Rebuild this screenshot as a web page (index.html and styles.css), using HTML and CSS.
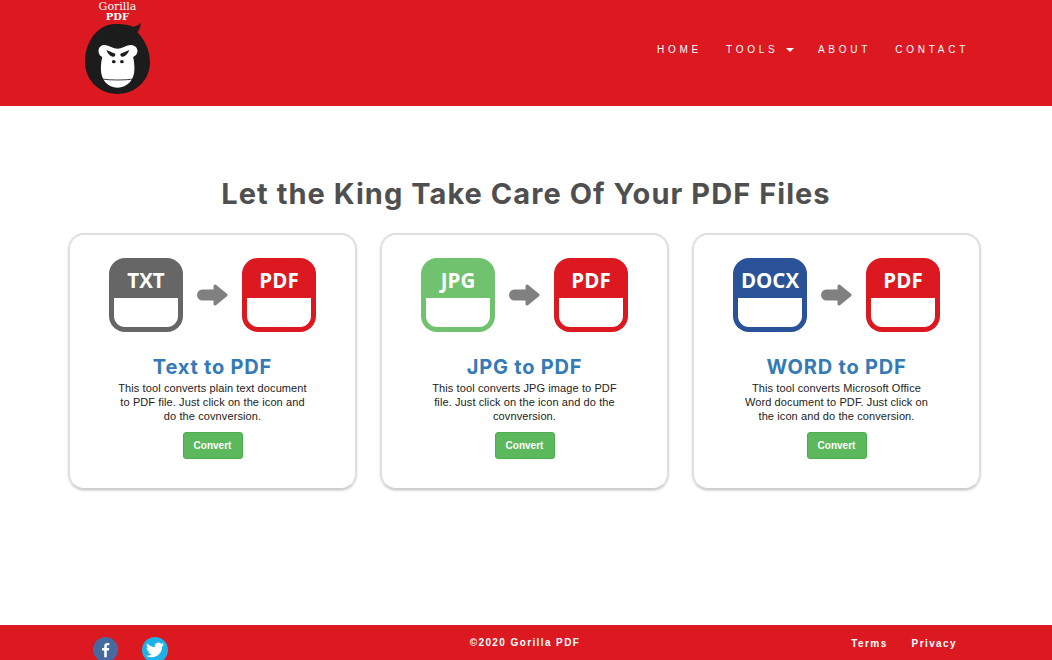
FILE: index.html
```html
<!DOCTYPE html>
<html lang="en">
<head>
<meta charset="utf-8">
<title>Gorilla PDF</title>
<link rel="stylesheet" href="styles.css">
</head>
<body>
<header class="site-header">
  <a class="brand" href="#">
    <span class="brand-name">Gorilla</span>
    <span class="brand-pdf">PDF</span>
    <svg class="brand-mark" viewBox="75 66 192 216" preserveAspectRatio="none" aria-hidden="true">
      <path fill="#1c1c1c" d="M165 72C190 72 208 76 218 80C226 78 234 74 241 68L237 77L241 76L235 83L239 84L232 89L236 92L229 95C250 118 267 150 267 186C267 240 225 282 171 282C117 282 75 240 75 186C75 125 112 72 165 72Z"/>
      <path fill="#fff" d="M115 153C115 142 123 134 134 135C146 136 158 146 171 146C184 146 196 136 208 135C220 134 230 142 230 153C230 162 224 168 217 171C220 182 221 194 221 208C221 240 200 263 171 263C142 263 122 240 122 208C122 194 123 182 126 171C119 168 115 162 115 153Z"/>
      <path fill="#1c1c1c" d="M138 150L164 161C166 166 163 171 157 170C149 169 142 161 138 150ZM206 150L180 161C178 166 181 171 187 170C195 169 202 161 206 150Z"/>
      <ellipse cx="160" cy="185" rx="5.500" ry="5" fill="#1c1c1c"/>
      <ellipse cx="184" cy="185" rx="5.500" ry="5" fill="#1c1c1c"/>
      <path fill="none" stroke="#1c1c1c" stroke-width="2.500" d="M124 237C150 241 192 241 219 237"/>
    </svg>
  </a>
  <nav class="main-nav">
    <a href="#">HOME</a>
    <a href="#">TOOLS <span class="caret"></span></a>
    <a href="#">ABOUT</a>
    <a href="#">CONTACT</a>
  </nav>
</header>

<main class="content">
  <h1>Let the King Take Care Of Your PDF Files</h1>
  <section class="cards">
    <article class="card">
      <div class="icons">
        <div class="doc doc-txt"><span class="doc-label">TXT</span><span class="doc-body"></span></div>
        <svg class="arrow" viewBox="0 0 31 24" aria-hidden="true"><path d="M18 3L29 12L18 21Z" fill="#808080" stroke="#808080" stroke-width="3" stroke-linejoin="round"/><path d="M5.500 12H20" stroke="#808080" stroke-width="11" stroke-linecap="round"/></svg>
        <div class="doc doc-pdf"><span class="doc-label">PDF</span><span class="doc-body"></span></div>
      </div>
      <h2>Text to PDF</h2>
      <p>This tool converts plain text document to PDF file. Just click on the icon and do the covnversion.</p>
      <a class="btn" href="#">Convert</a>
    </article>
    <article class="card">
      <div class="icons">
        <div class="doc doc-jpg"><span class="doc-label">JPG</span><span class="doc-body"></span></div>
        <svg class="arrow" viewBox="0 0 31 24" aria-hidden="true"><path d="M18 3L29 12L18 21Z" fill="#808080" stroke="#808080" stroke-width="3" stroke-linejoin="round"/><path d="M5.500 12H20" stroke="#808080" stroke-width="11" stroke-linecap="round"/></svg>
        <div class="doc doc-pdf"><span class="doc-label">PDF</span><span class="doc-body"></span></div>
      </div>
      <h2>JPG to PDF</h2>
      <p>This tool converts JPG image to PDF file. Just click on the icon and do the covnversion.</p>
      <a class="btn" href="#">Convert</a>
    </article>
    <article class="card">
      <div class="icons">
        <div class="doc doc-docx"><span class="doc-label">DOCX</span><span class="doc-body"></span></div>
        <svg class="arrow" viewBox="0 0 31 24" aria-hidden="true"><path d="M18 3L29 12L18 21Z" fill="#808080" stroke="#808080" stroke-width="3" stroke-linejoin="round"/><path d="M5.500 12H20" stroke="#808080" stroke-width="11" stroke-linecap="round"/></svg>
        <div class="doc doc-pdf"><span class="doc-label">PDF</span><span class="doc-body"></span></div>
      </div>
      <h2>WORD to PDF</h2>
      <p>This tool converts Microsoft Office Word document to PDF. Just click on the icon and do the conversion.</p>
      <a class="btn" href="#">Convert</a>
    </article>
  </section>
</main>

<footer class="site-footer">
  <div class="social">
    <a class="social-icon fb" href="#"><svg viewBox="0 0 24 24" aria-hidden="true"><path fill="#fff" d="M13.800 23v-9.500h3l.5-3.500h-3.500V7.700c0-1 .3-1.700 1.700-1.700h1.900V2.900c-.3 0-1.400-.1-2.700-.1-2.700 0-4.500 1.600-4.500 4.600V10H7v3.500h3.200V23z"/></svg></a>
    <a class="social-icon tw" href="#"><svg viewBox="0 0 24 24" aria-hidden="true"><path fill="#fff" d="M23.953 4.570a10 10 0 01-2.825.775 4.958 4.958 0 002.163-2.723c-.951.555-2.005.959-3.127 1.184a4.920 4.920 0 00-8.384 4.482C7.690 8.095 4.067 6.130 1.640 3.162a4.822 4.822 0 00-.666 2.475c0 1.710.870 3.213 2.188 4.096a4.904 4.904 0 01-2.228-.616v.060a4.923 4.923 0 003.946 4.827 4.996 4.996 0 01-2.212.085 4.936 4.936 0 004.604 3.417 9.867 9.867 0 01-6.102 2.105c-.390 0-.779-.023-1.170-.067a13.995 13.995 0 007.557 2.209c9.053 0 13.998-7.496 13.998-13.985 0-.210 0-.420-.015-.630A9.935 9.935 0 0024 4.590z"/></svg></a>
  </div>
  <div class="copyright">©2020 Gorilla PDF</div>
  <nav class="footer-links">
    <a href="#">Terms</a>
    <a href="#">Privacy</a>
  </nav>
</footer>
</body>
</html>
```
FILE: styles.css
```css
* { box-sizing: border-box; }
html, body { margin: 0; height: 660px; overflow: hidden; }
body {
  display: flex;
  flex-direction: column;
  font-family: "Liberation Sans", Arial, sans-serif;
  color: #222;
  background: #fff;
}
a { text-decoration: none; color: inherit; }

.site-header {
  flex: 0 0 106px;
  background: #dc1821;
  display: flex;
  justify-content: space-between;
  align-items: flex-start;
  padding: 0 83px 0 85px;
}
.brand {
  display: flex;
  flex-direction: column;
  align-items: center;
  width: 65px;
  color: #fff;
  font-family: "DejaVu Serif", serif;
  padding-top: 2px;
}
.brand-name { font-size: 11px; line-height: 10px; }
.brand-pdf { font-size: 10px; line-height: 10px; font-weight: 700; }
.brand-mark { width: 65px; height: 72px; display: block; }

.main-nav {
  display: flex;
  gap: 24px;
  margin-top: 44px;
  color: #fff;
  font-size: 10px;
  line-height: 11px;
  letter-spacing: 3.750px;
}
.caret {
  display: inline-block;
  width: 0;
  height: 0;
  margin-left: 1px;
  vertical-align: middle;
  border-top: 4px solid #fff;
  border-left: 4px solid transparent;
  border-right: 4px solid transparent;
}

.content { flex: 1; min-height: 0; padding-top: 71px; }
h1 {
  margin: 0 0 22px;
  text-align: center;
  font-family: Inter, sans-serif;
  font-size: 29px;
  line-height: 34px;
  font-weight: 700;
  letter-spacing: 1.050px;
  color: #4f4f4f;
}
.cards {
  display: grid;
  grid-template-columns: repeat(3, 289px);
  justify-content: space-between;
  width: 913px;
  margin-left: 68px;
}
.card {
  height: 257px;
  border: 2px solid #dfdfdf;
  border-bottom-color: #d0d0d0;
  border-radius: 16px;
  box-shadow: 0 1px 2px rgba(0,0,0,.15);
  display: flex;
  flex-direction: column;
  align-items: center;
  padding-top: 23px;
}
.icons { display: flex; align-items: center; gap: 14px; height: 74px; }
.doc {
  width: 74px;
  height: 74px;
  border-radius: 16px;
  padding: 0 5px 5px;
  display: flex;
  flex-direction: column;
  color: #fff;
}
.doc-label {
  flex: 0 0 40px;
  min-height: 0;
  text-align: center;
  font-family: "Open Sans", sans-serif;
  font-weight: 700;
  font-size: 20.500px;
  line-height: 44px;
}
.doc-body { flex: 1; background: #fff; border-radius: 0 0 11px 11px; }
.doc-txt { background: #666; }
.doc-pdf { background: #dc1821; }
.doc-jpg { background: #70c26f; }
.doc-docx { background: #2a5298; }
.arrow { width: 31px; height: 24px; display: block; }

h2 {
  margin: 23px 0 0;
  font-family: Inter, sans-serif;
  font-weight: 700;
  font-size: 20px;
  line-height: 24px;
  letter-spacing: .8px;
  color: #337ab7;
}
.card p {
  width: 192px;
  margin: 2px 0 9px;
  font-size: 11px;
  line-height: 14px;
  letter-spacing: .1px;
  text-align: center;
}
.btn {
  width: 60px;
  height: 27px;
  background: #5cb85c;
  border: 1px solid #4cae4c;
  border-radius: 3px;
  color: #fff;
  font-size: 10px;
  font-weight: 700;
  line-height: 25px;
  text-align: center;
}

.site-footer {
  flex: 0 0 35px;
  height: 35px;
  overflow: hidden;
  background: #dc1821;
  color: #fff;
  display: grid;
  grid-template-columns: 1fr auto 1fr;
  grid-template-rows: 35px;
  align-items: start;
  padding: 0 95px 0 93px;
  font-size: 10px;
  font-weight: 700;
  letter-spacing: 1.400px;
}
.social { display: flex; gap: 24px; padding-top: 12px; }
.social-icon {
  width: 25px;
  height: 25px;
  border-radius: 50%;
  display: block;
  flex: none;
  padding: 4px;
}
.social-icon svg { display: block; width: 100%; height: 100%; }
.fb { background: #46699f; }
.tw { width: 26px; height: 26px; background: #1cb2e8; }
.copyright { padding-top: 12px; line-height: 12px; }
.footer-links {
  display: flex;
  justify-content: flex-end;
  gap: 24px;
  padding-top: 13px;
  line-height: 12px;
}
```
